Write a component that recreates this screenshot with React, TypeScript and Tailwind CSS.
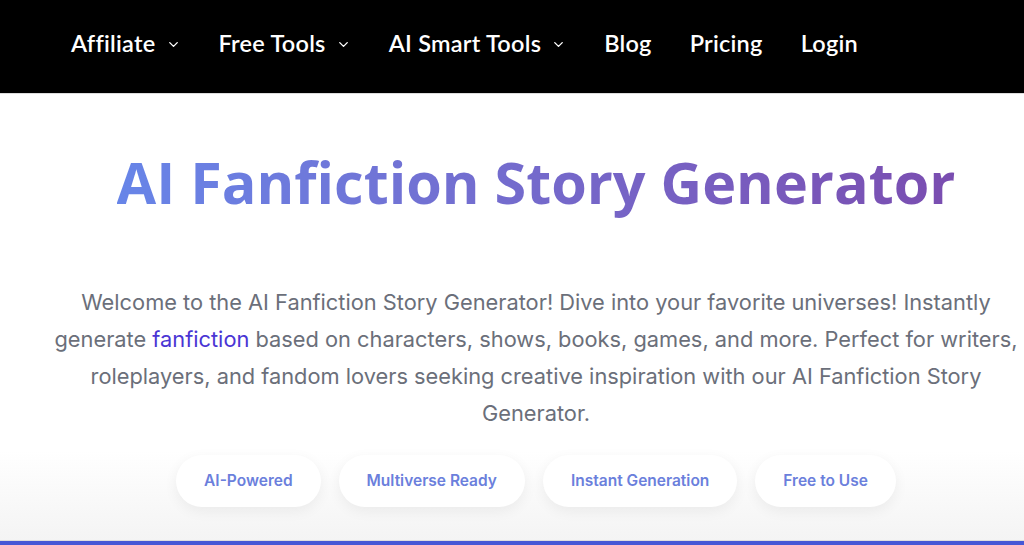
import { ChevronDown } from "lucide-react";

const navItems = [
    { label: "Affiliate", menu: true },
    { label: "Free Tools", menu: true },
    { label: "AI Smart Tools", menu: true },
    { label: "Blog", menu: false },
    { label: "Pricing", menu: false },
    { label: "Login", menu: false },
];

const badges = ["AI-Powered", "Multiverse Ready", "Instant Generation", "Free to Use"];

const App = () => {
    return (
        <div className="w-[1024px] h-[545px] overflow-hidden bg-white flex flex-col">
            {/* Header */}
            <header className="h-[94px] bg-black flex items-center pl-[71px] pb-[6px] border-b border-[#dcdcdc] shrink-0">
                <nav className="flex items-center gap-[38px] text-white font-['Lato','Noto_Sans',sans-serif] font-semibold text-[23.5px] tracking-[0.25px]">
                    {navItems.map(item => (
                        <a key={item.label} className="flex items-center gap-[10px] whitespace-nowrap">
                            {item.label}
                            {item.menu && <ChevronDown className="w-[15px] h-[15px] mt-[2px]" strokeWidth={2.2} />}
                        </a>
                    ))}
                </nav>
            </header>

            {/* Hero */}
            <main className="flex-1 flex flex-col items-center pl-[48px] pt-[52px] bg-gradient-to-b from-white from-80% to-[#f4f4f4]">
                <h1 className="text-[57.5px] leading-[72px] font-bold font-['Open_Sans','Noto_Sans',sans-serif] bg-gradient-to-r from-[#6785e8] to-[#7a4db0] bg-clip-text text-transparent whitespace-nowrap">
                    AI Fanfiction Story Generator
                </h1>

                <p className="mt-[66px] w-[968px] text-center text-[21.8px] leading-[37px] text-[#6b6f7a] font-['Inter',sans-serif]">
                    Welcome to the AI Fanfiction Story Generator! Dive into your favorite universes! Instantly generate{" "}
                    <span className="text-[#4a35d4]">fanfiction</span> based on characters, shows, books, games, and more. Perfect for
                    writers, roleplayers, and fandom lovers seeking creative inspiration with our AI Fanfiction Story Generator.
                </p>

                <div className="mt-[23px] flex gap-[18px]">
                    {badges.map(b => (
                        <span
                            key={b}
                            className="h-[52px] px-[28px] flex items-center rounded-full bg-white shadow-[0_4px_14px_rgba(0,0,0,0.06)] text-[15.5px] font-semibold text-[#6b7fdc] font-['Inter',sans-serif]"
                        >
                            {b}
                        </span>
                    ))}
                </div>
            </main>

            <div className="h-[1px] bg-[#dedede] shrink-0" />
            <div className="h-[4px] bg-[#4657d6] shrink-0" />
        </div>
    );
};

export default App;
